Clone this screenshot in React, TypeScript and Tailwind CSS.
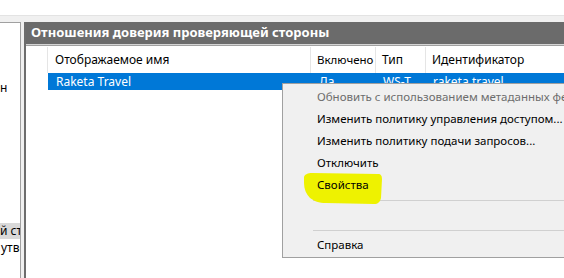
import React from "react";

const font = { fontFamily: '"Noto Sans", "Open Sans", sans-serif' };

function MenuItem({ label, disabled }: { label?: string; disabled?: boolean }) {
  return (
    <div
      className={`relative h-[22px] flex items-center pl-[34px] text-[11.5px] whitespace-nowrap ${
        disabled ? "text-[#6d6d6d]" : "text-[#000000]"
      }`}
    >
      {label}
    </div>
  );
}

function Separator() {
  return (
    <div className="h-[8px] flex items-center pl-[30px]">
      <div className="h-px w-full bg-[#d0d0d0]" />
    </div>
  );
}

export default function App() {
  return (
    <div className="relative w-[564px] h-[278px] overflow-hidden bg-white" style={font}>
      <div className="h-[15px] bg-white" />
      <div className="h-px bg-[#e3e3e3]" />
      <div className="h-[6px] bg-[#f0f0f0]" />
      <div className="flex h-[256px] bg-[#f0f0f0]">
        {/* left tree panel */}
        <div className="w-[21px] bg-white border-t border-r border-[#a0a0a0] overflow-hidden text-[12px] text-black whitespace-nowrap">
          <div className="h-[56px]" />
          <div className="h-[17px] leading-[17px]">н</div>
          <div className="h-[127px]" />
          <div className="h-[16px] leading-[16px] bg-[#d9d9d9]">й стороны</div>
          <div className="h-[17px] leading-[17px] pl-px">утверждений</div>
        </div>
        <div className="w-[3px]" />
        {/* right panel */}
        <div className="flex-1 flex flex-col border-l-2 border-[#6d6d6d] bg-white">
          <div className="h-[22px] bg-[#6b6b6b] flex items-center pl-[5px] text-white font-bold text-[13px] whitespace-nowrap">
            Отношения доверия проверяющей стороны
          </div>
          <div className="h-px bg-[#d4d4d4]" />
          <div className="h-px bg-[#a0a0a0]" />
          <div className="h-px bg-white" />
          {/* column header */}
          <div className="flex h-[26px] text-[12px] text-black whitespace-nowrap">
            <div className="w-[22px] border-r border-[#e5e5e5]" />
            <div className="w-[263px] border-r border-[#e5e5e5] pl-[7px] flex items-center overflow-hidden">Отображаемое имя</div>
            <div className="w-[65px] border-r border-[#e5e5e5] pl-[6px] flex items-center overflow-hidden text-[11.5px]">Включено</div>
            <div className="w-[50px] border-r border-[#e5e5e5] pl-[6px] flex items-center overflow-hidden">Тип</div>
            <div className="flex-1 pl-[6px] flex items-center overflow-hidden">Идентификатор</div>
          </div>
          {/* selected row */}
          <div className="flex h-[17px] text-[12px] whitespace-nowrap">
            <div className="w-[22px]" />
            <div className="flex-1 flex bg-[#0078d7] text-white items-center">
              <div className="w-[264px] pl-[8px]">Raketa Travel</div>
              <div className="w-[65px] pl-[7px]">Да</div>
              <div className="w-[50px] pl-[6px]">WS-T</div>
              <div className="flex-1 pl-[6px]">raketa.travel</div>
            </div>
          </div>
        </div>
      </div>

      {/* context menu */}
      <div className="absolute left-[282px] top-[83px] w-[320px] bg-[#f0f0f0] border border-[#a0a0a0] pt-[2px] pb-px">
        <svg className="absolute left-[19px] top-[87px]" width="84" height="36" viewBox="0 0 84 36">
          <path
            d="M2 6 C3 3 6 2 10 2 L76 3 C79 3 80 5 80 8 L79 27 C78 31 76 33 72 33 L24 32 C17 32 12 30 8 27 C4 23 2 18 2 12 Z"
            fill="#eef200"
          />
        </svg>
        <MenuItem label="Обновить с использованием метаданных федерации..." disabled />
        <MenuItem label="Изменить политику управления доступом..." />
        <MenuItem label="Изменить политику подачи запросов..." />
        <MenuItem label="Отключить" />
        <MenuItem label="Свойства" />
        <Separator />
        <MenuItem />
        <Separator />
        <MenuItem label="Справка" />
      </div>
    </div>
  );
}
